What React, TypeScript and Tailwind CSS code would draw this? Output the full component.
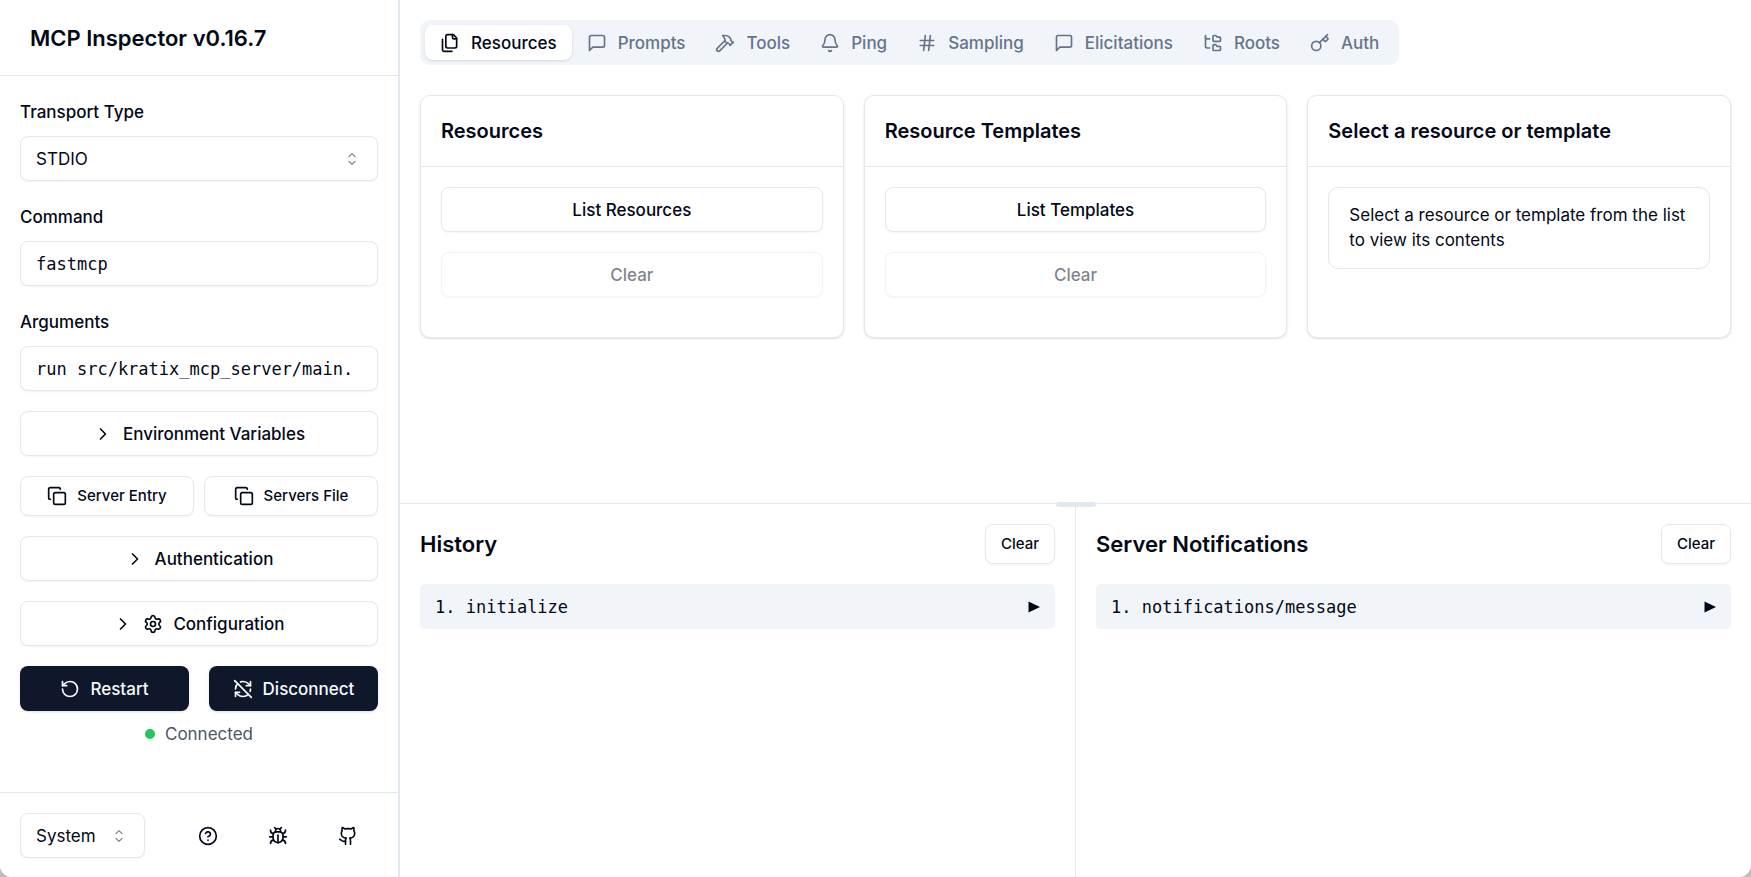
import {
  Bell,
  ChevronRight,
  CircleHelp,
  Copy,
  FolderTree,
  Github,
  Hammer,
  Hash,
  Key,
  RefreshCwOff,
  RotateCcw,
  Settings,
} from 'lucide-react';
import type { ComponentType, ReactNode, SVGProps } from 'react';

type IconType = ComponentType<{ className?: string }>;

const outline =
  'flex items-center justify-center gap-2.5 rounded-lg border border-[#e2e8f0] bg-white font-medium shadow-xs';
const field = 'h-[45px] w-full rounded-lg border border-[#e2e8f0] bg-white px-[15px] shadow-xs';
const mono = "font-['DejaVu_Sans_Mono',monospace]";

function StrokeIcon({ children, ...props }: SVGProps<SVGSVGElement>) {
  return (
    <svg
      viewBox="0 0 24 24"
      fill="none"
      stroke="currentColor"
      strokeWidth="2"
      strokeLinecap="round"
      strokeLinejoin="round"
      aria-hidden="true"
      {...props}
    >
      {children}
    </svg>
  );
}

function FilesIcon({ className }: { className?: string }) {
  return (
    <StrokeIcon className={className}>
      <path d="M20 7h-3a2 2 0 0 1-2-2V2" />
      <path d="M9 18a2 2 0 0 1-2-2V4a2 2 0 0 1 2-2h7l4 4v10a2 2 0 0 1-2 2Z" />
      <path d="M3 7.6v12.8A1.6 1.6 0 0 0 4.6 22h9.8" />
    </StrokeIcon>
  );
}

function MessageIcon({ className }: { className?: string }) {
  return (
    <StrokeIcon className={className}>
      <path d="M21 15a2 2 0 0 1-2 2H7l-4 4V5a2 2 0 0 1 2-2h14a2 2 0 0 1 2 2z" />
    </StrokeIcon>
  );
}

function BugIcon({ className }: { className?: string }) {
  return (
    <StrokeIcon className={className}>
      <path d="m8 2 1.88 1.88" />
      <path d="M14.12 3.88 16 2" />
      <path d="M9 7.13v-1a3.003 3.003 0 1 1 6 0v1" />
      <path d="M12 20c-3.3 0-6-2.7-6-6v-3a4 4 0 0 1 4-4h4a4 4 0 0 1 4 4v3c0 3.3-2.7 6-6 6" />
      <path d="M12 20v-9" />
      <path d="M6.53 9C4.6 8.8 3 7.1 3 5" />
      <path d="M6 13H2" />
      <path d="M3 21c0-2.1 1.7-3.9 3.8-4" />
      <path d="M20.97 5c0 2.1-1.6 3.8-3.5 4" />
      <path d="M22 13h-4" />
      <path d="M17.2 17c2.1.1 3.8 1.9 3.8 4" />
    </StrokeIcon>
  );
}

function CaretSort() {
  return (
    <svg
      viewBox="0 0 15 15"
      fill="none"
      stroke="currentColor"
      strokeWidth="0.9"
      strokeLinecap="round"
      strokeLinejoin="round"
      aria-hidden="true"
      className="pointer-events-none absolute right-4 top-1/2 size-5 -translate-y-1/2 opacity-50"
    >
      <path d="M5.25 5.75 7.5 3.5l2.25 2.25M5.25 9.25 7.5 11.5l2.25-2.25" />
    </svg>
  );
}

const TABS: { name: string; icon: IconType }[] = [
  { name: 'Resources', icon: FilesIcon },
  { name: 'Prompts', icon: MessageIcon },
  { name: 'Tools', icon: Hammer },
  { name: 'Ping', icon: Bell },
  { name: 'Sampling', icon: Hash },
  { name: 'Elicitations', icon: MessageIcon },
  { name: 'Roots', icon: FolderTree },
  { name: 'Auth', icon: Key },
];

const LINKS: { name: string; icon: IconType }[] = [
  { name: 'Inspector documentation', icon: CircleHelp },
  { name: 'Debugging guide', icon: BugIcon },
  { name: 'Report bugs or contribute on GitHub', icon: Github },
];

function Sidebar() {
  return (
    <aside className="flex w-[400px] shrink-0 flex-col border-r-2 border-[#e2e8f0] bg-white">
      <header className="flex h-19 items-center border-b border-gray-200 px-5">
        <h1 className="ml-2.5 text-[22px] leading-9 font-semibold">MCP Inspector v0.16.7</h1>
      </header>

      <div className="flex-1 space-y-5 overflow-hidden p-5">
        <div className="space-y-2">
          <label htmlFor="transport" className="block leading-8 font-medium">
            Transport Type
          </label>
          <div className="relative">
            <select id="transport" defaultValue="stdio" className={`${field} appearance-none`}>
              <option value="stdio">STDIO</option>
              <option value="sse">SSE</option>
              <option value="http">Streamable HTTP</option>
            </select>
            <CaretSort />
          </div>
        </div>
        <div className="space-y-2">
          <label htmlFor="command" className="block leading-8 font-medium">
            Command
          </label>
          <input id="command" defaultValue="fastmcp" className={`${field} ${mono} block`} />
        </div>
        <div className="space-y-2">
          <label htmlFor="arguments" className="block leading-8 font-medium">
            Arguments
          </label>
          <input
            id="arguments"
            defaultValue="run src/kratix_mcp_server/main."
            className={`${field} ${mono} block`}
          />
        </div>

        <button className={`${outline} h-[45px] w-full`}>
          <ChevronRight className="size-5" />
          Environment Variables
        </button>
        <div className="grid grid-cols-2 gap-2.5">
          <button className={`${outline} h-10 text-[15px]`}>
            <Copy className="size-5" />
            Server Entry
          </button>
          <button className={`${outline} h-10 text-[15px]`}>
            <Copy className="size-5" />
            Servers File
          </button>
        </div>
        <button className={`${outline} h-[45px] w-full`}>
          <ChevronRight className="size-5" />
          Authentication
        </button>
        <button className={`${outline} h-[45px] w-full`}>
          <ChevronRight className="size-5" />
          <Settings className="size-5" />
          Configuration
        </button>

        <div className="space-y-2">
          <div className="grid grid-cols-2 gap-5">
            <button className="flex h-[45px] items-center justify-center gap-2.5 rounded-lg bg-[#0f172a] font-medium text-[#f8fafc] shadow-sm">
              <RotateCcw className="size-5" />
              Restart
            </button>
            <button className="flex h-[45px] items-center justify-center gap-2.5 rounded-lg bg-[#0f172a] font-medium text-[#f8fafc] shadow-sm">
              <RefreshCwOff className="size-5" />
              Disconnect
            </button>
          </div>
          <div className="flex items-center justify-center gap-2.5 leading-[30px] text-[#4b5563]">
            <span className="size-2.5 rounded-full bg-[#22c55e]" />
            Connected
          </div>
        </div>
      </div>

      <footer className="flex items-center justify-between border-t border-[#e2e8f0] px-5 pt-5 pb-[19px]">
        <div className="relative w-[125px]">
          <select aria-label="Theme" defaultValue="system" className={`${field} appearance-none`}>
            <option value="system">System</option>
            <option value="light">Light</option>
            <option value="dark">Dark</option>
          </select>
          <CaretSort />
        </div>
        <nav className="flex gap-2.5">
          {LINKS.map(({ name, icon: Icon }) => (
            <a
              key={name}
              href="#"
              aria-label={name}
              className="flex h-[45px] w-[60px] items-center justify-center rounded-lg"
            >
              <Icon className="size-5" />
            </a>
          ))}
        </nav>
      </footer>
    </aside>
  );
}

function Card({ title, children }: { title: string; children: ReactNode }) {
  return (
    <section className="rounded-[10px] border border-[#e2e8f0] bg-white shadow-sm">
      <h3 className="border-b border-gray-200 p-5 text-xl leading-[30px] font-semibold">{title}</h3>
      <div className="space-y-5 p-5">{children}</div>
    </section>
  );
}

function ListPane({ title, action }: { title: string; action: string }) {
  return (
    <Card title={title}>
      <button className={`${outline} h-[45px] w-full`}>{action}</button>
      <button disabled className={`${outline} mb-5 h-[45px] w-full opacity-50`}>
        Clear
      </button>
    </Card>
  );
}

function LogPane({ title, entry }: { title: string; entry: string }) {
  return (
    <section className="flex-1 border-[#e2e8f0] p-5 first:border-r">
      <div className="mb-5 flex items-center justify-between">
        <h2 className="text-[22px] leading-9 font-semibold">{title}</h2>
        <button className={`${outline} h-10 px-[15px] text-[15px]`}>Clear</button>
      </div>
      <ul>
        <li className="rounded-[5px] bg-[#f1f5f9]">
          <button className={`${mono} flex h-[45px] w-full items-center justify-between px-[15px]`}>
            <span>1. {entry}</span>
            <svg viewBox="0 0 12 12" className="size-3" fill="currentColor" aria-hidden="true">
              <path d="M0.5 0.5 12 6 0.5 11.5z" />
            </svg>
          </button>
        </li>
      </ul>
    </section>
  );
}

export default function App() {
  return (
    <div className="h-screen bg-[#bdbdbd] font-[Inter,sans-serif] text-[17px] leading-[26px] text-[#020817]">
      <div className="flex h-full overflow-hidden rounded-b-xl bg-white">
        <Sidebar />
        <div className="flex min-w-0 flex-1 flex-col">
          <main className="min-h-0 flex-1 overflow-hidden p-5">
            <div role="tablist" className="inline-flex h-[45px] items-center rounded-[10px] bg-[#f1f5f9] p-[5px]">
              {TABS.map(({ name, icon: Icon }, i) => (
                <button
                  key={name}
                  role="tab"
                  aria-selected={i === 0}
                  className="flex h-[35px] items-center gap-[11px] rounded-lg px-[15px] font-medium text-[#64748b] aria-selected:bg-white aria-selected:text-[#020817] aria-selected:shadow-sm"
                >
                  <Icon className="size-5" />
                  {name}
                </button>
              ))}
            </div>
            <div className="mt-[30px] grid grid-cols-3 gap-5">
              <ListPane title="Resources" action="List Resources" />
              <ListPane title="Resource Templates" action="List Templates" />
              <Card title="Select a resource or template">
                <div className="rounded-[10px] border border-[#e2e8f0] px-5 py-[15px] leading-[25px]">
                  Select a resource or template from the list to view its contents
                </div>
              </Card>
            </div>
          </main>
          <div className="relative flex h-[374px] border-t border-[#e2e8f0]">
            <LogPane title="History" entry="initialize" />
            <LogPane title="Server Notifications" entry="notifications/message" />
            <div className="absolute -top-0.5 left-1/2 h-[5px] w-10 -translate-x-1/2 cursor-row-resize rounded-sm bg-[#e2e8f0]" />
          </div>
        </div>
      </div>
    </div>
  );
}
